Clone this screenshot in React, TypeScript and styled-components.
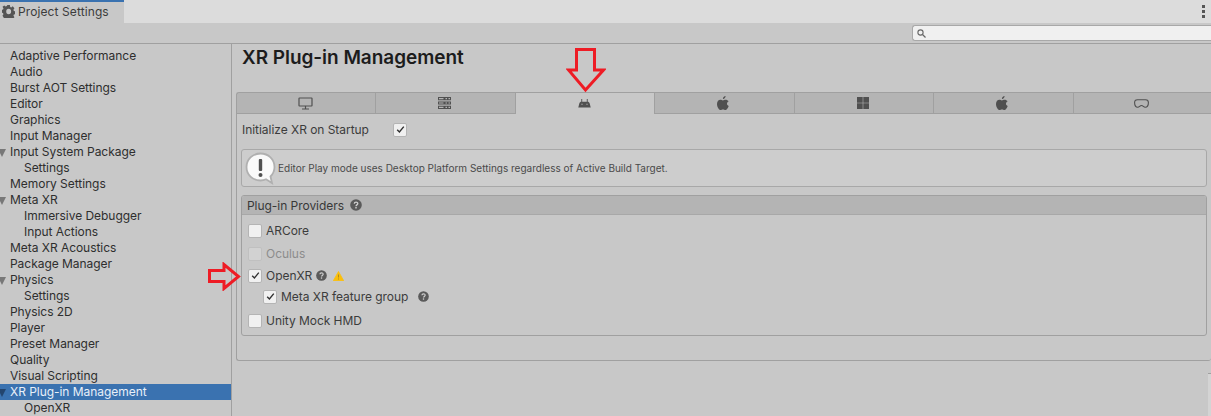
import React from "react";
import styled, { createGlobalStyle } from "styled-components";

const Global = createGlobalStyle`
  html, body { margin: 0; padding: 0; background: #c8c8c8; overflow: hidden; }
  body { font-family: Inter, "Liberation Sans", sans-serif; }
`;

const Page = styled.div`
  position: relative;
  width: 1211px;
  height: 416px;
  overflow: hidden;
  background: #c8c8c8;
  color: #303030;
  font-size: 12px;
  letter-spacing: -0.04px;
`;
const TabStrip = styled.div`
  height: 23px;
  display: flex;
  justify-content: space-between;
  background: #dcdcdc;
`;
const WindowTab = styled.div`
  width: 124px;
  box-sizing: border-box;
  border-top: 2px solid #3a72b0;
  background: #c8c8c8;
  display: flex;
  align-items: center;
  gap: 3px;
  padding: 0 0 3px 2px;
  font-size: 12px;
  letter-spacing: 0.1px;
  color: #3c3c3c;
`;
const Kebab = styled.div`
  width: 3px;
  margin: 5px 6px 0 0;
  display: flex;
  flex-direction: column;
  gap: 2px;
  span { display: block; width: 3px; height: 3px; background: #555; }
`;
const Toolbar = styled.div`
  height: 20px;
  border-bottom: 1px solid #a0a0a0;
  display: flex;
  justify-content: flex-end;
  align-items: center;
`;
const Search = styled.div`
  width: 299px;
  height: 16px;
  box-sizing: border-box;
  background: #f0f0f0;
  border: 1px solid #a8a8a8;
  border-right: none;
  border-radius: 3px 0 0 3px;
  display: flex;
  align-items: center;
  padding-left: 4px;
`;
const Body = styled.div`
  display: flex;
  height: 372px;
`;
const Sidebar = styled.div`
  width: 231px;
  flex: none;
  border-right: 1px solid #a0a0a0;
  padding-top: 4px;
`;
const Row = styled.div<{ $indent?: boolean; $selected?: boolean }>`
  position: relative;
  height: 16px;
  line-height: 16px;
  padding-left: ${(p) => (p.$indent ? 24 : 10)}px;
  background: ${(p) => (p.$selected ? "#3a72b0" : "transparent")};
  color: ${(p) => (p.$selected ? "#e8eff8" : "#2e2e2e")};
  white-space: nowrap;
`;
const Fold = styled.span<{ $selected?: boolean }>`
  position: absolute;
  left: -2px;
  top: 5px;
  width: 0;
  height: 0;
  border-left: 4px solid transparent;
  border-right: 4px solid transparent;
  border-top: 8px solid ${(p) => (p.$selected ? "#23456e" : "#787878")};
`;
const Main = styled.div`
  flex: 1;
  min-width: 0;
  padding: 0 0 0 4px;
`;
const Title = styled.h1`
  margin: 0;
  height: 48px;
  padding: 3px 0 0 6px;
  box-sizing: border-box;
  font-size: 19px;
  line-height: 22px;
  font-weight: 600;
  color: #1c1c1c;
`;
const Tabs = styled.div`
  display: grid;
  grid-template-columns: repeat(7, 1fr);
  height: 22px;
  width: 976px;
`;
const Tab = styled.div<{ $active?: boolean; $first?: boolean }>`
  display: flex;
  align-items: center;
  justify-content: center;
  box-sizing: border-box;
  padding-right: 2px;
  background: ${(p) => (p.$active ? "#c8c8c8" : "#b4b4b4")};
  border-top: 1px solid #a0a0a0;
  border-left: 1px solid #a0a0a0;
  border-bottom: ${(p) => (p.$active ? "none" : "1px solid #a0a0a0")};
  border-top-left-radius: ${(p) => (p.$first ? 3 : 0)}px;
  color: #505050;
`;
const Panel = styled.div`
  box-sizing: border-box;
  width: 975px;
  height: 247px;
  border-left: 1px solid #a0a0a0;
  border-bottom: 1px solid #a0a0a0;
  border-radius: 0 0 3px 3px;
  padding: 0 0 0 4px;
`;
const InitRow = styled.div`
  display: flex;
  align-items: center;
  height: 31px;
  margin-bottom: 4px;
  padding: 0 0 0 1px;
  color: #3c3c3c;
  label { width: 151px; }
`;
const Check = styled.span<{ $disabled?: boolean }>`
  display: inline-flex;
  flex: none;
  width: 14px;
  height: 14px;
  box-sizing: border-box;
  align-items: center;
  justify-content: center;
  background: ${(p) => (p.$disabled ? "#d2d2d2" : "#f0f0f0")};
  border: 1px solid ${(p) => (p.$disabled ? "#c0c0c0" : "#b4b4b4")};
  border-radius: 2px;
`;
const HelpBox = styled.div`
  width: 966px;
  height: 38px;
  box-sizing: border-box;
  border: 1px solid #a8a8a8;
  border-radius: 3px;
  background: #cdcdcd;
  display: flex;
  align-items: center;
  padding-left: 3px;
  gap: 2px;
  font-size: 10px;
  letter-spacing: 0;
  color: #4a4a4a;
`;
const Providers = styled.div`
  width: 966px;
  height: 141px;
  margin-top: 8px;
  box-sizing: border-box;
  border: 1px solid #a0a0a0;
  border-radius: 3px;
`;
const ProvidersHead = styled.div`
  height: 18px;
  margin-bottom: 4px;
  background: #b4b4b4;
  border-bottom: 1px solid #a8a8a8;
  display: flex;
  align-items: center;
  gap: 6px;
  padding-left: 5px;
  color: #383838;
  border-radius: 2px 2px 0 0;
`;
const Provider = styled.div<{ $h: number; $sub?: boolean; $disabled?: boolean }>`
  height: ${(p) => p.$h}px;
  display: flex;
  align-items: center;
  gap: 4px;
  padding-left: ${(p) => (p.$sub ? 21 : 6)}px;
  color: ${(p) => (p.$disabled ? "#8c8c8c" : "#3c3c3c")};
`;
const Spacer = styled.span<{ $w: number }>`
  width: ${(p) => p.$w}px;
  flex: none;
`;
const WarnIcon = styled.svg`
  margin-left: 2px;
  flex: none;
`;
const Arrow = styled.svg<{ $x: number; $y: number }>`
  position: absolute;
  left: ${(p) => p.$x}px;
  top: ${(p) => p.$y}px;
`;
const EdgeSliver = styled.div`
  position: absolute;
  right: 0;
  top: 373px;
  bottom: 0;
  width: 3px;
  background: #d4d4d4;
  border-top: 1px solid #a0a0a0;
`;

const Tick = () => (
  <svg width="9" height="9" viewBox="0 0 9 9">
    <path d="M1.2 4.8 3.4 7 7.8 1.6" fill="none" stroke="#303030" strokeWidth="1.4" />
  </svg>
);
const HelpIcon = ({ size = 12 }: { size?: number }) => (
  <svg width={size} height={size} viewBox="0 0 12 12">
    <circle cx="6" cy="6" r="5.8" fill="#5a5a5a" />
    <path d="M4.300 4.700c0-2.200 3.500-2.200 3.500-.1 0 1.300-1.800 1.300-1.800 2.600" fill="none" stroke="#d0d0d0" strokeWidth="1.300" />
    <rect x="5.300" y="8" width="1.400" height="1.500" fill="#d0d0d0" />
  </svg>
);
const Apple = () => (
  <svg width="12" height="14" viewBox="0 0 12 14">
    <path fill="#505050" d="M8.600 0c.1 1.600-1.300 3-2.700 2.900C5.800 1.500 7.200.1 8.600 0ZM11.700 10c-.7 1.900-2 4-3.300 4-.9 0-1.300-.6-2.400-.6S4.400 14 3.600 14C2 14 0 10.700 0 7.900 0 5.200 1.700 3.700 3.300 3.700c1 0 1.900.7 2.600.7s1.500-.7 2.800-.7c1 0 2.200.5 3 1.600-2.500 1.500-2.100 3.900 0 4.700Z" />
  </svg>
);
const Monitor = () => (
  <svg width="15" height="13" viewBox="0 0 15 13">
    <rect x="1" y="1" width="13" height="8" fill="none" stroke="#505050" strokeWidth="1.200" rx="0.5" />
    <path d="M7.500 9v3M4 12h7" stroke="#505050" strokeWidth="1.200" fill="none" />
  </svg>
);
const Server = () => (
  <svg width="13" height="12" viewBox="0 0 13 12">
    <path
      fill="#505050"
      fillRule="evenodd"
      d="M0 0h13v3.200H0ZM0 4.400h13v3.200H0ZM0 8.800h13V12H0ZM1 1v1.200h4.500V1ZM7.500 1v1.200h1.500V1ZM10.500 1v1.200H12V1ZM1 5.400v1.200h4.500V5.400ZM7.500 5.400v1.200h1.500V5.400ZM10.500 5.400v1.200H12V5.400ZM1 9.800V11h4.500V9.800ZM7.500 9.800V11h1.500V9.800ZM10.500 9.800V11H12V9.800Z"
    />
  </svg>
);
const Android = () => (
  <svg width="13" height="9" viewBox="0 0 13 9">
    <path fill="#505050" d="M.3 8.500 1.300 4.500C1.600 3.300 2.400 2.800 3.500 2.800h6c1.100 0 1.900.5 2.200 1.700l1 4ZM3.300 0h.9v3h-.9ZM8.800 0h.9v3h-.9Z" />
    <path fill="#c8c8c8" d="M3.500 4.700h1v1h-1ZM8.500 4.700h1v1h-1Z" />
  </svg>
);
const Windows = () => (
  <svg width="12" height="12" viewBox="0 0 12 12">
    <path fill="#505050" d="M0 0h5.700v5.700H0ZM6.300 0H12v5.700H6.300ZM0 6.300h5.700V12H0ZM6.300 6.300H12V12H6.300Z" />
  </svg>
);
const Headset = () => (
  <svg width="15" height="9" viewBox="0 0 15 9">
    <path fill="none" stroke="#505050" strokeWidth="1.100" d="M3.500.7h8c1.700 0 2.900 1 2.900 2.800 0 2.400-1.200 4.700-3.200 4.700-1.700 0-2-1.700-3.700-1.700S5.500 8.200 3.800 8.200C1.800 8.200.6 5.900.6 3.500.6 1.700 1.800.7 3.500.7Z" />
  </svg>
);

const rows: { t: string; indent?: boolean; fold?: boolean; sel?: boolean }[] = [
  { t: "Adaptive Performance" },
  { t: "Audio" },
  { t: "Burst AOT Settings" },
  { t: "Editor" },
  { t: "Graphics" },
  { t: "Input Manager" },
  { t: "Input System Package", fold: true },
  { t: "Settings", indent: true },
  { t: "Memory Settings" },
  { t: "Meta XR", fold: true },
  { t: "Immersive Debugger", indent: true },
  { t: "Input Actions", indent: true },
  { t: "Meta XR Acoustics" },
  { t: "Package Manager" },
  { t: "Physics", fold: true },
  { t: "Settings", indent: true },
  { t: "Physics 2D" },
  { t: "Player" },
  { t: "Preset Manager" },
  { t: "Quality" },
  { t: "Visual Scripting" },
  { t: "XR Plug-in Management", fold: true, sel: true },
  { t: "OpenXR", indent: true },
];

const tabIcons = [<Monitor />, <Server />, <Android />, <Apple />, <Windows />, <Apple />, <Headset />];

export default function App() {
  return (
    <Page>
      <Global />
      <TabStrip>
        <WindowTab>
          <svg width="13" height="13" viewBox="0 0 24 24">
            <path
              fill="#555"
              fillRule="evenodd"
              d="M9.500 0h5l.7 3.500 2.100.9 3-2 3.500 3.500-2 3 .9 2.100 3.500.7v5l-3.500.7-.9 2.100 2 3-3.500 3.500-3-2-2.100.9-.7 3.500h-5l-.7-3.500-2.100-.9-3 2L-.7 20l2-3-.9-2.100L-3 14.200v-5l3.500-.7.9-2.100-2-3L2.900.9l3 2 2.100-.9ZM12 7a5 5 0 1 0 0 10 5 5 0 0 0 0-10Z"
              transform="translate(1.500 0) scale(0.9 1)"
            />
          </svg>
          Project Settings
        </WindowTab>
        <Kebab>
          <span />
          <span />
          <span />
        </Kebab>
      </TabStrip>
      <Toolbar>
        <Search>
          <svg width="9" height="9" viewBox="0 0 9 9">
            <circle cx="3.500" cy="3.500" r="2.600" fill="none" stroke="#666" strokeWidth="1.100" />
            <path d="M5.500 5.500 8.500 8.500" stroke="#666" strokeWidth="1.300" />
          </svg>
        </Search>
      </Toolbar>
      <Body>
        <Sidebar>
          {rows.map((r, i) => (
            <Row key={i} $indent={r.indent} $selected={r.sel}>
              {r.fold && <Fold $selected={r.sel} />}
              {r.t}
            </Row>
          ))}
        </Sidebar>
        <Main>
          <Title>XR Plug-in Management</Title>
          <Tabs>
            {tabIcons.map((ic, i) => (
              <Tab key={i} $active={i === 2} $first={i === 0}>
                {ic}
              </Tab>
            ))}
          </Tabs>
          <Panel>
            <InitRow>
              <label>Initialize XR on Startup</label>
              <Check>
                <Tick />
              </Check>
            </InitRow>
            <HelpBox>
              <svg width="31" height="33" viewBox="0 0 31 33">
                <path
                  d="M15.500 1.500C7.500 1.500 1.500 7.500 1.500 15s6 13.500 14 13.500c2.200 0 3.700-.3 5.500-1.200l6 3.700-1.500-6.500c2.500-2.500 4-5.800 4-9.500 0-7.500-6-13.500-14-13.500Z"
                  fill="#fafafa"
                  stroke="#b0b0b0"
                  strokeWidth="1.800"
                />
                <rect x="13.800" y="7" width="3.400" height="12" rx="1" fill="#505050" />
                <circle cx="15.500" cy="23" r="2" fill="#505050" />
              </svg>
              Editor Play mode uses Desktop Platform Settings regardless of Active Build Target.
            </HelpBox>
            <Providers>
              <ProvidersHead>
                Plug-in Providers
                <HelpIcon />
              </ProvidersHead>
              <Provider $h={23}>
                <Check />
                ARCore
              </Provider>
              <Provider $h={23} $disabled>
                <Check $disabled />
                Oculus
              </Provider>
              <Provider $h={21}>
                <Check>
                  <Tick />
                </Check>
                OpenXR
                <HelpIcon size={11} />
                <WarnIcon width="11" height="10" viewBox="0 0 11 10">
                  <path d="M5.500 .5 10.700 9.700H.3Z" fill="#fbbf0a" stroke="#fbbf0a" strokeWidth="0.800" strokeLinejoin="round" />
                  <rect x="5" y="3.500" width="1" height="3" fill="#b08a20" />
                  <rect x="5" y="7.500" width="1" height="1" fill="#b08a20" />
                </WarnIcon>
              </Provider>
              <Provider $h={21} $sub>
                <Check>
                  <Tick />
                </Check>
                Meta XR feature group
                <Spacer $w={2} />
                <HelpIcon size={11} />
              </Provider>
              <Provider $h={27}>
                <Check />
                Unity Mock HMD
              </Provider>
            </Providers>
          </Panel>
        </Main>
      </Body>
      <EdgeSliver />
      <Arrow $x={566} $y={47} width="40" height="46" viewBox="0 0 40 46">
        <path d="M10.500 2.500h18V23h9L19.500 43 2.500 23h8Z" fill="none" stroke="#ee1c25" strokeWidth="3" />
      </Arrow>
      <Arrow $x={207} $y={262} width="34" height="29" viewBox="0 0 34 29">
        <path d="M2.500 8.500h14.500V2.500l14.500 12-14.500 12v-7H2.500Z" fill="none" stroke="#ee1c25" strokeWidth="3" />
      </Arrow>
    </Page>
  );
}
